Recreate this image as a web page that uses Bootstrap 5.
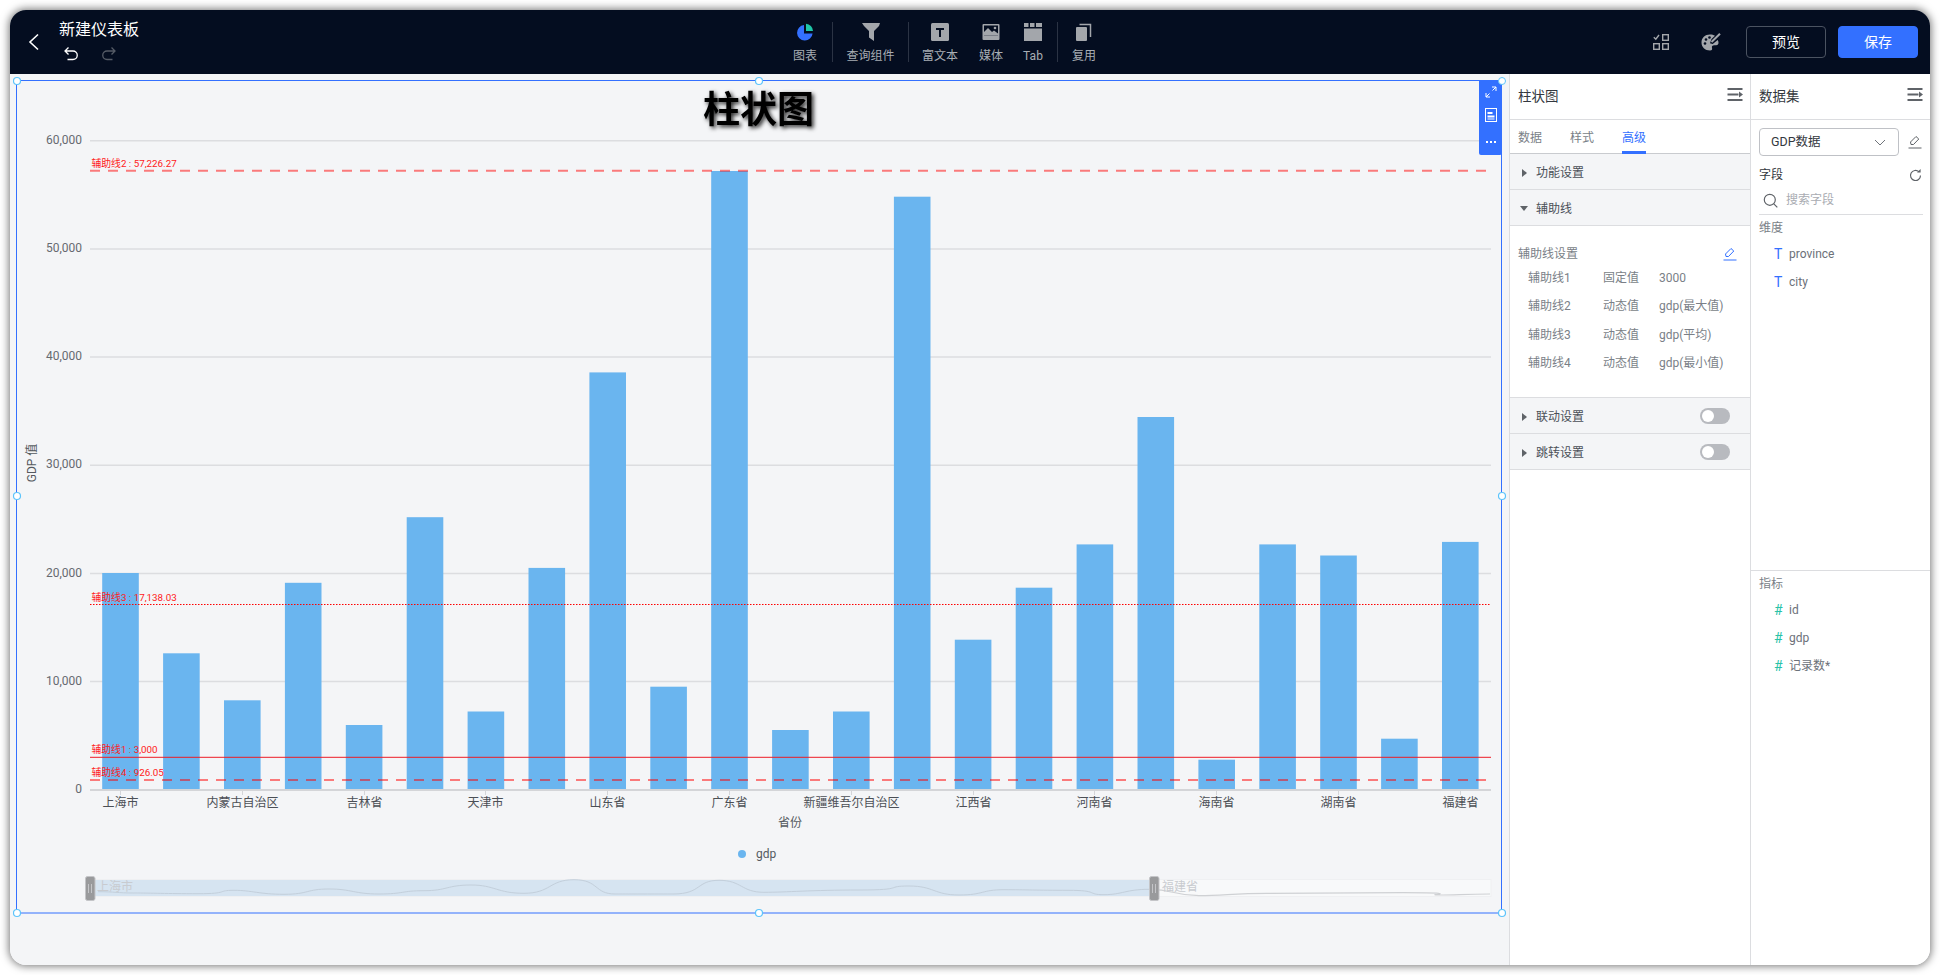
<!DOCTYPE html>
<html lang="zh-CN">
<head>
<meta charset="utf-8">
<title>新建仪表板</title>
<link href="https://cdn.jsdelivr.net/npm/bootstrap@5.3.0/dist/css/bootstrap.min.css" rel="stylesheet">
<style>
html,body{height:100%;margin:0;background:#fff;overflow:hidden;}
body{font-family:Roboto,"Noto Sans CJK SC",sans-serif;font-size:12px;padding:10px;color:#4b5058;}
.app-win{height:955px;border-radius:16px;overflow:hidden;box-shadow:0 0 8px 1px rgba(0,0,0,.55);background:#f4f5f7;}
.top-bar{height:64px;background:#040d20;flex:none;}
.top-left{width:142px;padding-left:16px;flex:none;}
.back-ic{width:16px;height:20px;margin-right:17px;}
.doc-title{font-size:16px;line-height:22px;color:#fff;margin-top:-1px;}
.undo-row{gap:22px;padding-left:0;height:20px;margin-top:3px;}
.tool-set{margin-left:626px;height:40px;align-items:flex-start;}
.tool-item{color:#a8adb4;font-size:12px;line-height:16px;text-align:center;padding-top:1px;flex:none;}
.tool-item svg{display:block;margin:0 auto 7px;width:18px;height:18px;}
.t-chart{width:54px;}
.t-query{width:75px;}
.t-rich{width:62px;}
.t-media{width:34px;margin-left:3px;margin-right:8px;}
.t-tab{width:34px;margin-right:7px;}
.t-copy{width:52px;}
.tool-sep{width:1px;height:40px;background:#2b3344;flex:none;}
.top-right{margin-left:auto;padding-right:12px;}
.ic-grid{margin-right:32px;}
.ic-pal{margin-right:25px;}
.btn-view,.btn-store{width:80px;height:32px;padding:0;font-size:14px;border-radius:4px;line-height:30px;}
.btn-view{background:transparent;border:1px solid #4b5361;color:#fff;margin-right:12px;}
.btn-view:hover{color:#fff;background:transparent;border-color:#4b5361;}
.btn-store{background:#3370ff;border:1px solid #3370ff;color:#fff;}
.stage{flex:1 1 auto;min-height:0;}
.board{flex:1 1 auto;min-width:0;position:relative;background:#f4f5f7;}
.chart-svg{display:block;width:1499px;height:891px;overflow:visible;}
.chart-svg text{font-family:Roboto,"Noto Sans CJK SC",sans-serif;}
.float-tools{position:absolute;left:1469px;top:6px;width:23px;height:75px;background:#3370ff;border-radius:0 0 2px 2px;padding-top:6px;gap:10px;}
.float-tools svg{display:block;}
.sel-dot{position:absolute;left:1488px;top:3px;width:8px;height:8px;border-radius:50%;background:#fff;border:1px solid #5cc4fb;}
.side-a{width:241px;flex:none;background:#fff;border-left:1px solid #dcdde0;position:relative;z-index:1;}
.side-b{width:180px;flex:none;background:#fff;border-left:1px solid #dcdde0;position:relative;z-index:1;}
.side-head{height:46px;padding:0 7px 0 8px;border-bottom:1px solid #dcdde0;font-size:13.5px;color:#333840;}
.head-ic{margin-top:-5px;}
.tab-row{height:34px;padding-left:8px;gap:28px;border-bottom:1px solid #c9cbcf;}
.tab-lnk{display:block;padding:0;line-height:37px;height:34px;width:24px;white-space:nowrap;color:#7a7f87;font-size:12px;text-decoration:none;border-bottom:3px solid transparent;margin-bottom:-1px;}
.tab-lnk.on{color:#3370ff;border-bottom-color:#3370ff;}
.sec-row{height:36px;background:#f4f5f7;border-bottom:1px solid #dcdde0;padding:2px 20px 0 12px;color:#4b5058;font-size:12px;}
.sec-row svg{margin-right:9px;flex:none;}
.sec-row svg.car-down{margin-left:-2px;margin-right:8px;}
.sec-row.sec-first{height:37px;border-top:1px solid #dcdde0;}
.sec-box{height:171px;padding:18px 13px 0 8px;}
.sec-title{height:20px;color:#7a7f87;}
.line-row{height:28.300px;padding-left:10px;color:#7a7f87;}
.cell-a{width:75px;}
.cell-b{width:56px;}
.tog{width:30px;height:16px;border-radius:8px;background:#b8babf;margin-left:auto;position:relative;margin-top:-2px;}
.tog::after{content:"";position:absolute;left:2px;top:2px;width:12px;height:12px;border-radius:50%;background:#fff;}
.data-sel{margin:8px 0 0 8px;gap:9px;}
.sel-box{width:140px;flex:none;height:28px;border:1px solid #bfc1c6;border-radius:4px;padding:0 12px 0 11px;color:#333840;font-size:12.5px;}
.fld-head{margin:9px 8px 0 8px;height:20px;color:#333840;}
.fld-find{margin:5px 7px 0 8px;height:25px;padding:0 0 4px 4px;border-bottom:1px solid #dcdde0;color:#a9acb2;gap:8px;}
.grp-lab{margin:3px 8px 0;height:20px;line-height:20px;color:#7a7f87;}
.grp-dim{height:355px;}
.grp-mea{border-top:1px solid #dcdde0;}
.fld-item{height:28px;padding-left:23px;color:#6c7179;}
.fld-item b{display:block;width:15px;font-weight:400;font-size:14px;}
.dim-mark{color:#3370ff;}
.mea-mark{color:#29c2a8;}
.fld-list{margin-top:2px;}
</style>
</head>
<body>
<div class="app-win d-flex flex-column">
  <header class="top-bar d-flex align-items-center">
    <div class="top-left d-flex align-items-center">
      <svg class="back-ic" viewBox="0 0 16 20"><path d="M12 2.500 4 10l8 7.500" fill="none" stroke="#fff" stroke-width="1.600"/></svg>
      <div>
        <div class="doc-title text-nowrap">新建仪表板</div>
        <div class="undo-row d-flex align-items-center ps-1">
          <svg width="16" height="16" viewBox="0 0 16 16"><path d="M5.500 1.500 2 5l3.500 3.500M2.500 5H10a4 4 0 0 1 0 8.500H4.500" fill="none" stroke="#fff" stroke-width="1.300"/></svg>
          <svg width="16" height="16" viewBox="0 0 16 16"><path d="M10.500 1.500 14 5l-3.500 3.500M13.500 5H6a4 4 0 0 0 0 8.500h5.500" fill="none" stroke="#555b66" stroke-width="1.300"/></svg>
        </div>
      </div>
    </div>
    <div class="tool-set d-flex">
      <div class="tool-item t-chart"><svg viewBox="0 0 18 18"><path d="M8 2a7.800 7.800 0 1 0 8.600 8.500H8z" fill="#3370ff"/><path d="M10 .8a7.500 7.500 0 0 1 7 7.200h-7z" fill="#1fc6a8"/></svg>图表</div>
      <div class="tool-sep"></div>
      <div class="tool-item t-query"><svg viewBox="0 0 18 18"><path d="M0 0h18l-1 3-5 5v10l-5-3.500V8L2 3z" fill="#a3a6ab"/></svg>查询组件</div>
      <div class="tool-sep"></div>
      <div class="tool-item t-rich"><svg viewBox="0 0 18 18"><rect width="18" height="18" rx="1.500" fill="#a3a6ab"/><path d="M5 5h8v2H10v7H8V7H5z" fill="#040d20"/></svg>富文本</div>
      <div class="tool-item t-media"><svg viewBox="0 0 18 18"><rect x=".5" y="1" width="17" height="16" rx="1" fill="#a3a6ab"/><rect x="2" y="2.500" width="14" height="10" fill="#040d20"/><path d="M2 9l4-4 4 4 2-1.500 4 3v2H2z" fill="#a3a6ab"/><circle cx="13" cy="5" r="1.300" fill="#a3a6ab"/></svg>媒体</div>
      <div class="tool-item t-tab"><svg viewBox="0 0 18 18"><path d="M0 0h4.500v4H0zM6 0h4.500v4H6zM12 0h6v4h-6zM0 5.500h18V18H0z" fill="#a3a6ab"/></svg>Tab</div>
      <div class="tool-sep"></div>
      <div class="tool-item t-copy"><svg viewBox="0 0 18 18"><rect x="1" y="4" width="11" height="14" rx="1" fill="#a3a6ab"/><path d="M4.500 1.500H15.500V14" fill="none" stroke="#a3a6ab" stroke-width="1.500"/></svg>复用</div>
    </div>
    <div class="top-right d-flex align-items-center">
      <svg class="ic-grid" width="16" height="16" viewBox="0 0 16 16"><g fill="none" stroke="#a3a6ab" stroke-width="1.400"><rect x="9.700" y=".7" width="5.600" height="5.600"/><rect x=".7" y="9.700" width="5.600" height="5.600"/><rect x="9.700" y="9.700" width="5.600" height="5.600"/><path d="M.8 3.200l2 2L6 1"/></g></svg>
      <svg class="ic-pal" width="20" height="18" viewBox="0 0 20 18"><path d="M9 1.500C4 1.500.5 5 .5 9.500S4 17.500 9 17.500c2 0 2.500-1 2-2.500-.5-1.800 .5-2.700 2.200-2.700h2c1.500 0 2.300-1 2.300-2.500 0-1-.3-2-.8-2.800l-5 4-2.700-.8L10.500 6 14 2.800C12.500 2 11 1.500 9 1.500z" fill="#a3a6ab"/><path d="M10.500 9 19 .8" stroke="#a3a6ab" stroke-width="2"/><circle cx="5" cy="6.500" r="1.300" fill="#040d20"/><circle cx="4" cy="10.500" r="1.300" fill="#040d20"/><circle cx="8.500" cy="4.500" r="1.300" fill="#040d20"/></svg>
      <button type="button" class="btn btn-view">预览</button>
      <button type="button" class="btn btn-store">保存</button>
    </div>
  </header>
  <div class="stage d-flex">
    <main class="board">
      <svg class="chart-svg" viewBox="10 74 1499 891">
        <g stroke="#dcdde0" stroke-width="1.500">
          <line x1="90" x2="1491" y1="140.700" y2="140.700"/><line x1="90" x2="1491" y1="248.900" y2="248.900"/><line x1="90" x2="1491" y1="357" y2="357"/><line x1="90" x2="1491" y1="465.200" y2="465.200"/><line x1="90" x2="1491" y1="573.400" y2="573.400"/><line x1="90" x2="1491" y1="681.500" y2="681.500"/>
        </g>
        <g font-size="12" fill="#666a70" text-anchor="end">
          <text x="82" y="144">60,000</text><text x="82" y="252">50,000</text><text x="82" y="360">40,000</text><text x="82" y="468">30,000</text><text x="82" y="577">20,000</text><text x="82" y="685">10,000</text><text x="82" y="793">0</text>
        </g>
        <text transform="translate(36 463) rotate(-90)" font-size="12" fill="#555a60" text-anchor="middle">GDP 值</text>
        <g fill="#6ab5ef">
          <rect x="102.200" y="573" width="36.600" height="217"/><rect x="163.100" y="653.300" width="36.600" height="136.700"/><rect x="224" y="700.300" width="36.600" height="89.700"/><rect x="284.900" y="582.800" width="36.600" height="207.200"/><rect x="345.800" y="725" width="36.600" height="65"/><rect x="406.700" y="517.200" width="36.600" height="272.800"/><rect x="467.600" y="711.500" width="36.600" height="78.500"/><rect x="528.500" y="567.900" width="36.600" height="222.100"/><rect x="589.400" y="372.400" width="36.600" height="417.600"/><rect x="650.300" y="686.700" width="36.600" height="103.300"/><rect x="711.200" y="171" width="36.600" height="619"/><rect x="772.100" y="730" width="36.600" height="60"/><rect x="833" y="711.500" width="36.600" height="78.500"/><rect x="893.900" y="196.700" width="36.600" height="593.300"/><rect x="954.800" y="639.700" width="36.600" height="150.300"/><rect x="1015.700" y="587.700" width="36.600" height="202.300"/><rect x="1076.600" y="544.400" width="36.600" height="245.600"/><rect x="1137.500" y="417" width="36.600" height="373"/><rect x="1198.400" y="759.700" width="36.600" height="30.300"/><rect x="1259.300" y="544.400" width="36.600" height="245.600"/><rect x="1320.200" y="555.500" width="36.600" height="234.500"/><rect x="1381.100" y="738.700" width="36.600" height="51.300"/><rect x="1442" y="541.900" width="36.600" height="248.100"/>
        </g>
        <line x1="90" x2="1491" y1="790" y2="790" stroke="#d4d5d8" stroke-width="2"/>
        <g stroke="#d4d5d8" stroke-width="1">
          <path d="M120.500 790v5M242.500 790v5M364.500 790v5M485.500 790v5M607.500 790v5M729.500 790v5M851.500 790v5M973.500 790v5M1094.500 790v5M1216.500 790v5M1338.500 790v5M1460.500 790v5"/>
        </g>
        <g font-size="12" fill="#4b4f55" text-anchor="middle">
          <text x="120.500" y="807">上海市</text><text x="242.500" y="807">内蒙古自治区</text><text x="364.500" y="807">吉林省</text><text x="485.500" y="807">天津市</text><text x="607.500" y="807">山东省</text><text x="729.500" y="807">广东省</text><text x="851.500" y="807">新疆维吾尔自治区</text><text x="973.500" y="807">江西省</text><text x="1094.500" y="807">河南省</text><text x="1216.500" y="807">海南省</text><text x="1338.500" y="807">湖南省</text><text x="1460.500" y="807">福建省</text>
          <text x="790" y="827" fill="#555a60">省份</text>
        </g>
        <line x1="90" x2="1491" y1="170.800" y2="170.800" stroke="#ff0000" stroke-opacity=".5" stroke-width="2" stroke-dasharray="10 8"/>
        <line x1="90" x2="1491" y1="604.500" y2="604.500" stroke="#ff0000" stroke-width="1" stroke-dasharray="1.500 1.500"/>
        <line x1="90" x2="1491" y1="757.300" y2="757.300" stroke="#ee1c25" stroke-width="1"/>
        <line x1="90" x2="1491" y1="780" y2="780" stroke="#ff0000" stroke-opacity=".5" stroke-width="2" stroke-dasharray="10 8"/>
        <g font-size="9.800" fill="#ff1a1a">
          <text x="91.500" y="167">辅助线2 : 57,226.27</text>
          <text x="91.500" y="600.500">辅助线3 : 17,138.03</text>
          <text x="91.500" y="753">辅助线1 : 3,000</text>
          <text x="91.500" y="776">辅助线4 : 926.05</text>
        </g>
        <circle cx="742" cy="854" r="4" fill="#6ab5ef"/>
        <text x="756" y="858" font-size="12" fill="#555a60">gdp</text>
        <rect x="90" y="879.500" width="1401" height="17" fill="#f8f9fa" stroke="#eff0f2" stroke-width="1"/>
        <rect x="95" y="880" width="1059" height="16" fill="#d6e4f1"/>
        <path d="M98 891.700C116 891.700 116 893 134 893S166 893.700 198 893.700 216 890.300 234 890.300 259 894.300 284 894.300 306 889 329 889 354 894 379 894 401 890.700 424 890.700 447 885 471 885 497 893.300 524 893.300 549 879.700 574 879.700 594 894 615 894 644 894 673 894 696 880.300 719 880.300 741 892.300 764 892.300 811 890 859 890 884 886 909 886 934 895 959 895 981 889.700 1004 889.700 1036 890.300 1068 890.300 1086 894.700 1104 894.700 1126 889.300 1149 889.300" fill="none" stroke="#c3cfdb" stroke-width="1"/>
        <path d="M1149 889.300C1174 889.300 1174 895.700 1199 895.700S1233 893.300 1267 893.300 1335 892.700 1403 892.700 1421 895 1439 895 1464 894 1490 894" fill="none" stroke="#cfd1d4" stroke-width="1.200"/>
        <g font-size="12" fill="#c8cbd0"><text x="97" y="891">上海市</text><text x="1162" y="891">福建省</text></g>
        <rect x="85.500" y="876.500" width="9.500" height="24" rx="2" fill="#999a9c" stroke="#c4c5c8"/>
        <path d="M88.500 884v9M91.500 884v9" stroke="#c4c5c8"/>
        <rect x="1149.500" y="876.500" width="9.500" height="24" rx="2" fill="#999a9c" stroke="#c4c5c8"/>
        <path d="M1152.500 884v9M1155.500 884v9" stroke="#c4c5c8"/>
        <text x="758.500" y="123" font-size="37" font-weight="700" fill="#000" text-anchor="middle" style="filter:drop-shadow(2px 2px 2px rgba(0,0,0,.85))">柱状图</text>
        <rect x="16.500" y="80.500" width="1485" height="832.500" fill="none" stroke="#3370ff" stroke-width="1"/>
        <g fill="#fff" stroke="#5cc4fb" stroke-width="1.200">
          <circle cx="17" cy="81" r="3.500"/><circle cx="759" cy="81" r="3.500"/><circle cx="17" cy="496" r="3.500"/><circle cx="1502" cy="496" r="3.500"/><circle cx="17" cy="913" r="3.500"/><circle cx="759" cy="913" r="3.500"/><circle cx="1502" cy="913" r="3.500"/>
        </g>
      </svg>
      <div class="float-tools d-flex flex-column align-items-center">
        <svg width="12" height="12" viewBox="0 0 12 12"><path d="M7 1h4v4M11 1 7.500 4.500M1 7v4h4M1 11l3.500-3.500" fill="none" stroke="#fff" stroke-width="1"/></svg>
        <svg width="12" height="14" viewBox="0 0 12 14"><rect x=".5" y=".5" width="11" height="13" fill="none" stroke="#fff"/><path d="M2.500 4h5v2h-5zM2.500 7.500h7v2h-7zM2.500 10.500h7v1h-7z" fill="#fff"/></svg>
        <svg class="mt-2" width="12" height="4" viewBox="0 0 12 4"><path d="M1 1h2v2H1zM5 1h2v2H5zM9 1h2v2H9z" fill="#fff"/></svg>
      </div>
      <span class="sel-dot"></span>
    </main>
    <aside class="side-a d-flex flex-column">
      <div class="side-head d-flex align-items-center justify-content-between">
        <span>柱状图</span>
        <svg class="head-ic" width="16" height="13" viewBox="0 0 16 13"><path d="M.5 1h15M.5 6.500h11M.5 12h15" stroke="#5f6368" stroke-width="2"/><path d="M12 3.500 16 6.500l-4 3z" fill="#5f6368"/></svg>
      </div>
      <nav class="tab-row d-flex">
        <a class="tab-lnk" href="#">数据</a>
        <a class="tab-lnk" href="#">样式</a>
        <a class="tab-lnk on" href="#">高级</a>
      </nav>
      <div class="sec-row d-flex align-items-center"><svg width="5" height="8" viewBox="0 0 5 8"><path d="M0 0l5 4-5 4z" fill="#5f6368"/></svg>功能设置</div>
      <div class="sec-row d-flex align-items-center"><svg class="car-down" width="8" height="5" viewBox="0 0 8 5"><path d="M0 0h8L4 5z" fill="#5f6368"/></svg>辅助线</div>
      <div class="sec-box">
        <div class="sec-title d-flex align-items-center justify-content-between">
          <span>辅助线设置</span>
          <svg width="14" height="14" viewBox="0 0 14 14"><path d="M3 9.500l-.5-2.500L8 1.500l2.800 2.500L5.500 9.500z" fill="none" stroke="#3370ff"/><path d="M.5 13h13" stroke="#3370ff"/></svg>
        </div>
        <div class="line-rows">
          <div class="line-row d-flex align-items-center"><span class="cell-a">辅助线1</span><span class="cell-b">固定值</span><span>3000</span></div>
          <div class="line-row d-flex align-items-center"><span class="cell-a">辅助线2</span><span class="cell-b">动态值</span><span>gdp(最大值)</span></div>
          <div class="line-row d-flex align-items-center"><span class="cell-a">辅助线3</span><span class="cell-b">动态值</span><span>gdp(平均)</span></div>
          <div class="line-row d-flex align-items-center"><span class="cell-a">辅助线4</span><span class="cell-b">动态值</span><span>gdp(最小值)</span></div>
        </div>
      </div>
      <div class="sec-row sec-first d-flex align-items-center"><svg width="5" height="8" viewBox="0 0 5 8"><path d="M0 0l5 4-5 4z" fill="#5f6368"/></svg>联动设置<span class="tog"></span></div>
      <div class="sec-row d-flex align-items-center"><svg width="5" height="8" viewBox="0 0 5 8"><path d="M0 0l5 4-5 4z" fill="#5f6368"/></svg>跳转设置<span class="tog"></span></div>
    </aside>
    <aside class="side-b d-flex flex-column">
      <div class="side-head d-flex align-items-center justify-content-between">
        <span>数据集</span>
        <svg class="head-ic" width="16" height="13" viewBox="0 0 16 13"><path d="M.5 1h15M.5 6.500h11M.5 12h15" stroke="#5f6368" stroke-width="2"/><path d="M12 3.500 16 6.500l-4 3z" fill="#5f6368"/></svg>
      </div>
      <div class="data-sel d-flex align-items-center">
        <div class="sel-box d-flex align-items-center justify-content-between">
          <span>GDP数据</span>
          <svg width="12" height="7" viewBox="0 0 12 7"><path d="M1 1l5 5 5-5" fill="none" stroke="#70747a"/></svg>
        </div>
        <svg width="14" height="14" viewBox="0 0 14 14"><path d="M3 9.500l-.5-2.500L8 1.500l2.800 2.500L5.500 9.500z" fill="none" stroke="#5f6368"/><path d="M.5 13h13" stroke="#5f6368" stroke-width="1.200"/></svg>
      </div>
      <div class="fld-head d-flex align-items-center justify-content-between">
        <span>字段</span>
        <svg width="13" height="13" viewBox="0 0 13 13"><path d="M11.500 6.500a5 5 0 1 1-1.600-3.700" fill="none" stroke="#5f6368" stroke-width="1.200"/><path d="M8 3.400h3.600V0z" fill="#5f6368"/></svg>
      </div>
      <div class="fld-find d-flex align-items-center">
        <svg width="15" height="15" viewBox="0 0 15 15"><circle cx="6.800" cy="6.800" r="5.500" fill="none" stroke="#5f6368" stroke-width="1.200"/><path d="M10.800 10.800l3.500 3.500" stroke="#5f6368" stroke-width="1.200"/></svg>
        <span>搜索字段</span>
      </div>
      <div class="grp-dim">
        <div class="grp-lab">维度</div>
        <div class="fld-list">
          <div class="fld-item d-flex align-items-center"><b class="dim-mark">T</b>province</div>
          <div class="fld-item d-flex align-items-center"><b class="dim-mark">T</b>city</div>
        </div>
      </div>
      <div class="grp-mea">
        <div class="grp-lab">指标</div>
        <div class="fld-list">
          <div class="fld-item d-flex align-items-center"><b class="mea-mark">#</b>id</div>
          <div class="fld-item d-flex align-items-center"><b class="mea-mark">#</b>gdp</div>
          <div class="fld-item d-flex align-items-center"><b class="mea-mark">#</b>记录数*</div>
        </div>
      </div>
    </aside>
  </div>
</div>
<script src="https://cdn.jsdelivr.net/npm/bootstrap@5.3.0/dist/js/bootstrap.bundle.min.js"></script>
</body>
</html>
